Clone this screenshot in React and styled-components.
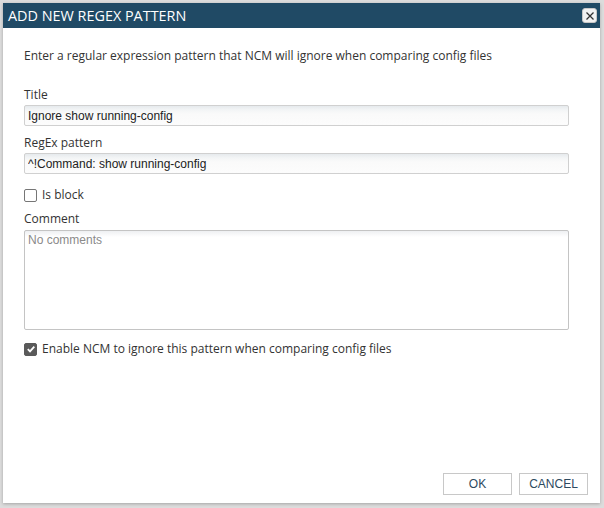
import React from "react";
import styled, { createGlobalStyle } from "styled-components";

const GlobalStyle = createGlobalStyle`
  html, body {
    margin: 0;
    padding: 0;
    background: #dcdcdc;
    font-family: "Open Sans", "Liberation Sans", sans-serif;
  }
`;

function CheckIcon() {
  return (
    <svg width="10" height="10" viewBox="0 0 10 10">
      <path d="M1.8 5.2 L4 7.4 L8.3 2.6" fill="none" stroke="#fff" strokeWidth="1.8" />
    </svg>
  );
}

function App() {
  return (
    <Page>
      <GlobalStyle />
      <Dialog>
        <Header>
          <HeaderTitle>ADD NEW REGEX PATTERN</HeaderTitle>
          <CloseButton aria-label="close">
            <svg width="10" height="10" viewBox="0 0 10 10">
              <path d="M1.5 1.5 L8.5 8.5 M8.5 1.5 L1.5 8.5" stroke="#333" strokeWidth="1.3" />
            </svg>
          </CloseButton>
        </Header>

        <Body>
          <Intro>
            Enter a regular expression pattern that NCM will ignore when comparing config files
          </Intro>

          <Field $top={23}>
            <Label>Title</Label>
            <TextInput defaultValue="Ignore show running-config" />
          </Field>

          <Field $top={9}>
            <Label>RegEx pattern</Label>
            <TextInput defaultValue="^!Command: show running-config" />
          </Field>

          <CheckRow $top={13}>
            <Box />
            <CheckLabel>Is block</CheckLabel>
          </CheckRow>

          <Field $top={8}>
            <Label>Comment</Label>
            <CommentArea placeholder="No comments" />
          </Field>

          <CheckRow $top={11}>
            <Box $checked>
              <CheckIcon />
            </Box>
            <CheckLabel>Enable NCM to ignore this pattern when comparing config files</CheckLabel>
          </CheckRow>
        </Body>

        <Footer>
          <Button>OK</Button>
          <Button>CANCEL</Button>
        </Footer>
      </Dialog>
    </Page>
  );
}

const Page = styled.div`
  width: 604px;
  height: 508px;
  padding: 3px 4px 5px 3px;
  box-sizing: border-box;
  display: flex;
`;

const Dialog = styled.div`
  flex: 1;
  display: flex;
  flex-direction: column;
  background: #fff;
  box-shadow: 0 1px 3px rgba(0, 0, 0, 0.25);
`;

const Header = styled.div`
  height: 25px;
  background: #204a65;
  display: flex;
  align-items: center;
  justify-content: space-between;
  padding: 0 3px 0 5px;
`;

const HeaderTitle = styled.h1`
  margin: 0;
  color: #fff;
  font-size: 14.4px;
  line-height: 16px;
  font-weight: 400;
`;

const CloseButton = styled.button`
  width: 15px;
  height: 15px;
  padding: 0;
  border: 1px solid #c8c8c8;
  border-radius: 3px;
  background: #f2f2f2;
  display: flex;
  align-items: center;
  justify-content: center;
`;

const Body = styled.div`
  flex: 1;
  padding: 20px 31px 0 21px;
  display: flex;
  flex-direction: column;
`;

const Intro = styled.p`
  margin: 0;
  font-size: 12px;
  line-height: 16px;
  color: #333;
`;

const Field = styled.div`
  display: flex;
  flex-direction: column;
  gap: 2px;
  margin-top: ${(p) => p.$top}px;
`;

const Label = styled.label`
  font-size: 12px;
  line-height: 16px;
  color: #333;
`;

const TextInput = styled.input`
  height: 21px;
  box-sizing: border-box;
  border: 1px solid #d0d0d0;
  border-radius: 2px;
  padding: 0 3px;
  margin: 0;
  font-family: "Liberation Sans", Arial, sans-serif;
  font-size: 12px;
  color: #222;
  background: linear-gradient(#e6eaed 0, #f3f5f6 4px, #fafafa 8px, #fcfcfc 100%);
  outline: none;
`;

const CommentArea = styled.textarea`
  height: 100px;
  box-sizing: border-box;
  margin: 1px 0 0;
  border: 1px solid #c4c4c4;
  border-radius: 2px;
  padding: 2px 3px;
  font-family: "Liberation Sans", Arial, sans-serif;
  font-size: 12px;
  resize: none;
  background: linear-gradient(#eef0f2 0, #fff 6px);
  outline: none;
  &::placeholder {
    color: #8a8a8a;
  }
`;

const CheckRow = styled.div`
  display: flex;
  align-items: center;
  gap: 5px;
  height: 16px;
  margin-top: ${(p) => p.$top}px;
`;

const Box = styled.span`
  width: 13px;
  height: 13px;
  box-sizing: border-box;
  border-radius: 2px;
  border: 1px solid ${(p) => (p.$checked ? "#5a5a5a" : "#767676")};
  background: ${(p) => (p.$checked ? "#5a5a5a" : "#fff")};
  display: flex;
  align-items: center;
  justify-content: center;
`;

const CheckLabel = styled.span`
  font-size: 12px;
  line-height: 16px;
  color: #333;
`;

const Footer = styled.div`
  display: flex;
  justify-content: flex-end;
  gap: 7px;
  padding: 0 12px 8px 0;
`;

const Button = styled.button`
  width: 69px;
  height: 22px;
  border: 1px solid #c8c8c8;
  background: #fff;
  color: #2d4a60;
  font-family: "Liberation Sans", Arial, sans-serif;
  font-size: 12px;
  padding: 0;
`;

export default App;
